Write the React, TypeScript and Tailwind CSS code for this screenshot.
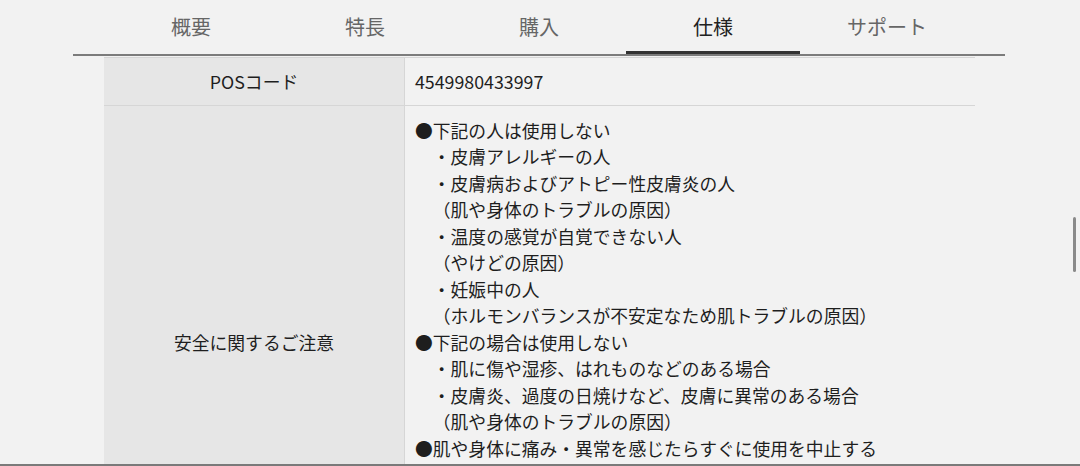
import React from "react";

const tabs = ["概要", "特長", "購入", "仕様", "サポート"];

type Line = { text: string; indent?: boolean };

const cautions: Line[] = [
  { text: "●下記の人は使用しない" },
  { text: "・皮膚アレルギーの人", indent: true },
  { text: "・皮膚病およびアトピー性皮膚炎の人", indent: true },
  { text: "（肌や身体のトラブルの原因）", indent: true },
  { text: "・温度の感覚が自覚できない人", indent: true },
  { text: "（やけどの原因）", indent: true },
  { text: "・妊娠中の人", indent: true },
  { text: "（ホルモンバランスが不安定なため肌トラブルの原因）", indent: true },
  { text: "●下記の場合は使用しない" },
  { text: "・肌に傷や湿疹、はれものなどのある場合", indent: true },
  { text: "・皮膚炎、過度の日焼けなど、皮膚に異常のある場合", indent: true },
  { text: "（肌や身体のトラブルの原因）", indent: true },
  { text: "●肌や身体に痛み・異常を感じたらすぐに使用を中止する" },
  { text: "（そのまま使用を続けると症状が悪化するおそれがある）", indent: true },
  { text: "●同じ部位に長時間続けて使用しない" },
  { text: "（肌トラブルの原因）", indent: true },
  { text: "●使用後は必ず電源を切る" },
];

const App = () => {
  return (
    <div
      className="relative h-[466px] w-[1080px] overflow-hidden bg-[#f2f2f2] text-[#1e1e1e]"
      style={{ fontFamily: '"Noto Sans CJK JP", "Noto Sans", sans-serif' }}
    >
      {/* tabs */}
      <div className="ml-[73px] w-[932px] border-b-2 border-[#7c7c7c]">
        <div className="ml-[31px] flex">
          {tabs.map((t, i) => (
            <div
              key={t}
              className={
                i === 3
                  ? "flex h-[54px] w-[174px] items-center justify-center border-b-[3px] border-[#333] pt-[3px] text-[20px] text-[#222]"
                  : "flex h-[54px] w-[174px] items-center justify-center text-[20px] text-[#666]"
              }
            >
              {t}
            </div>
          ))}
        </div>
      </div>

      {/* spec table */}
      <div className="ml-[104px] mt-px w-[871px] border-t border-[#d6d6d6] text-[17.8px] leading-[26.5px]">
        <div className="grid grid-cols-[301px_1fr] border-b border-[#d6d6d6]">
          <div className="flex items-center justify-center border-r border-[#d6d6d6] bg-[#e6e6e6]">
            POSコード
          </div>
          <div className="py-[10px] pl-[10px]">4549980433997</div>
        </div>
        <div className="grid grid-cols-[301px_1fr] border-b border-[#d6d6d6]">
          <div className="flex items-center justify-center border-r border-[#d6d6d6] bg-[#e6e6e6]">
            安全に関するご注意
          </div>
          <div className="py-[11px] pl-[10px]">
            {cautions.map((l, i) => (
              <div key={i} className={l.indent ? "pl-[17.8px]" : ""}>
                {l.text}
              </div>
            ))}
          </div>
        </div>
      </div>

      {/* overlay scrollbar */}
      <div className="absolute left-[1073px] top-[217px] h-[55px] w-[3px] rounded-full bg-[#8a8a8a]" />
      {/* bottom edge */}
      <div className="absolute bottom-0 left-0 h-[2px] w-full bg-[#7a7a7a]" />
    </div>
  );
};

export default App;
